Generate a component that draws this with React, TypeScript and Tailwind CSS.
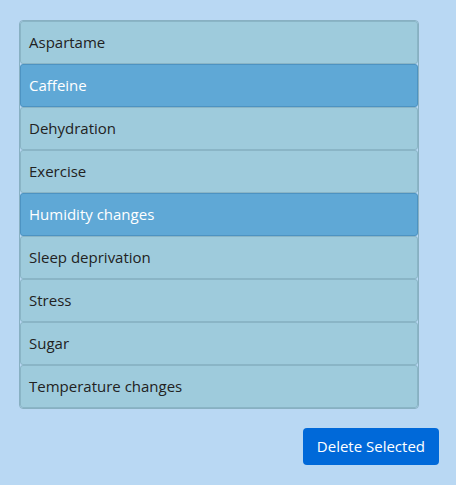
import { useState } from "react"

const ITEMS = [
  "Aspartame",
  "Caffeine",
  "Dehydration",
  "Exercise",
  "Humidity changes",
  "Sleep deprivation",
  "Stress",
  "Sugar",
  "Temperature changes",
]

export default function App() {
  const [selected, setSelected] = useState<string[]>(["Caffeine", "Humidity changes"])

  const toggle = (name: string) =>
    setSelected((prev) =>
      prev.includes(name) ? prev.filter((n) => n !== name) : [...prev, name]
    )

  return (
    <div
      className="w-[456px] h-[485px] bg-[#b9d8f3] pt-5 pl-[19px] pr-[17px]"
      style={{ fontFamily: '"Open Sans", "Noto Sans", sans-serif' }}
    >
      <ul className="w-[400px] rounded border border-[#88b0c2] overflow-hidden">
        {ITEMS.map((name) => {
          const on = selected.includes(name)
          return (
            <li
              key={name}
              onClick={() => toggle(name)}
              className={
                on
                  ? "h-[43px] flex items-center px-[8px] text-[15px] text-white bg-[#5fa8d6] border border-[#4d93c2] rounded-[3px] cursor-pointer"
                  : "h-[43px] flex items-center px-[8px] text-[15px] text-[#222] bg-[#9ecbdc] border border-[#8ab5c6] rounded-[3px] cursor-pointer"
              }
            >
              {name}
            </li>
          )
        })}
      </ul>

      <div className="flex justify-end mt-[19px]">
        <button className="h-[37px] px-[14px] rounded bg-[#0069d9] text-white text-[15px]">
          Delete Selected
        </button>
      </div>
    </div>
  )
}
